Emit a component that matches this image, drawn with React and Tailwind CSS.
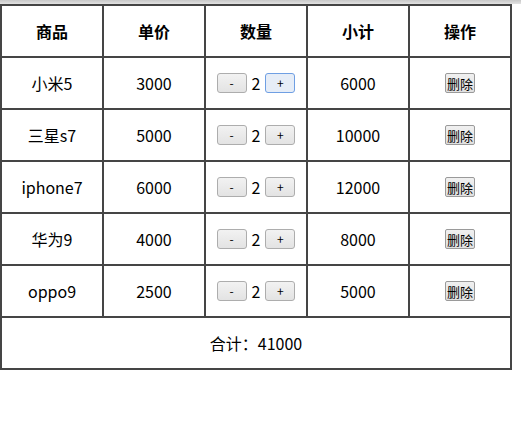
import React from "react";

const rows = [
  { name: "小米5", price: 3000, qty: 2, focus: true },
  { name: "三星s7", price: 5000, qty: 2 },
  { name: "iphone7", price: 6000, qty: 2 },
  { name: "华为9", price: 4000, qty: 2 },
  { name: "oppo9", price: 2500, qty: 2 },
];

const cell =
  "h-[52px] flex items-center justify-center border-r-2 border-b-2 border-[#454545]";

function QtyBtn({ label, focus }) {
  return (
    <button
      className={
        "w-[30px] h-[20px] rounded-[3px] border text-[12px] leading-none text-black flex items-center justify-center " +
        (focus
          ? "border-[#6f9fe3] bg-[#e6edf7]"
          : "border-[#adadad] bg-gradient-to-b from-[#f2f2f2] to-[#e3e3e3]")
      }
    >
      {label}
    </button>
  );
}

export default function App() {
  const total = rows.reduce((s, r) => s + r.price * r.qty, 0);
  return (
    <div
      className="w-[521px] h-[440px] bg-white text-black"
      style={{ fontFamily: '"Noto Sans CJK SC", "Microsoft YaHei", sans-serif' }}
    >
      <div className="h-[4px] w-full bg-gradient-to-b from-[#c8c8c8] to-[#e2e2e2]" />
      <div className="w-[512px] border-l-2 border-t-2 border-[#454545] grid grid-cols-[repeat(5,102px)]">
        {["商品", "单价", "数量", "小计", "操作"].map((h) => (
          <div key={h} className={cell + " text-[16px] font-bold"}>
            {h}
          </div>
        ))}
        {rows.map((r) => (
          <React.Fragment key={r.name}>
            <div className={cell + " text-[16px]"}>{r.name}</div>
            <div className={cell + " text-[16px]"}>{r.price}</div>
            <div className={cell}>
              <div className="flex items-center">
                <QtyBtn label="-" />
                <span className="text-[16px] mx-[5px] leading-none">{r.qty}</span>
                <QtyBtn label="+" focus={r.focus} />
              </div>
            </div>
            <div className={cell + " text-[16px]"}>{r.price * r.qty}</div>
            <div className={cell}>
              <button className="w-[30px] h-[20px] rounded-[2px] border border-[#9a9a9a] bg-gradient-to-b from-[#f0f0f0] to-[#e0e0e0] text-[13px] leading-none flex items-center justify-center">
                删除
              </button>
            </div>
          </React.Fragment>
        ))}
        <div className={cell + " col-span-5 text-[16px]"}>合计：{total}</div>
      </div>
    </div>
  );
}
